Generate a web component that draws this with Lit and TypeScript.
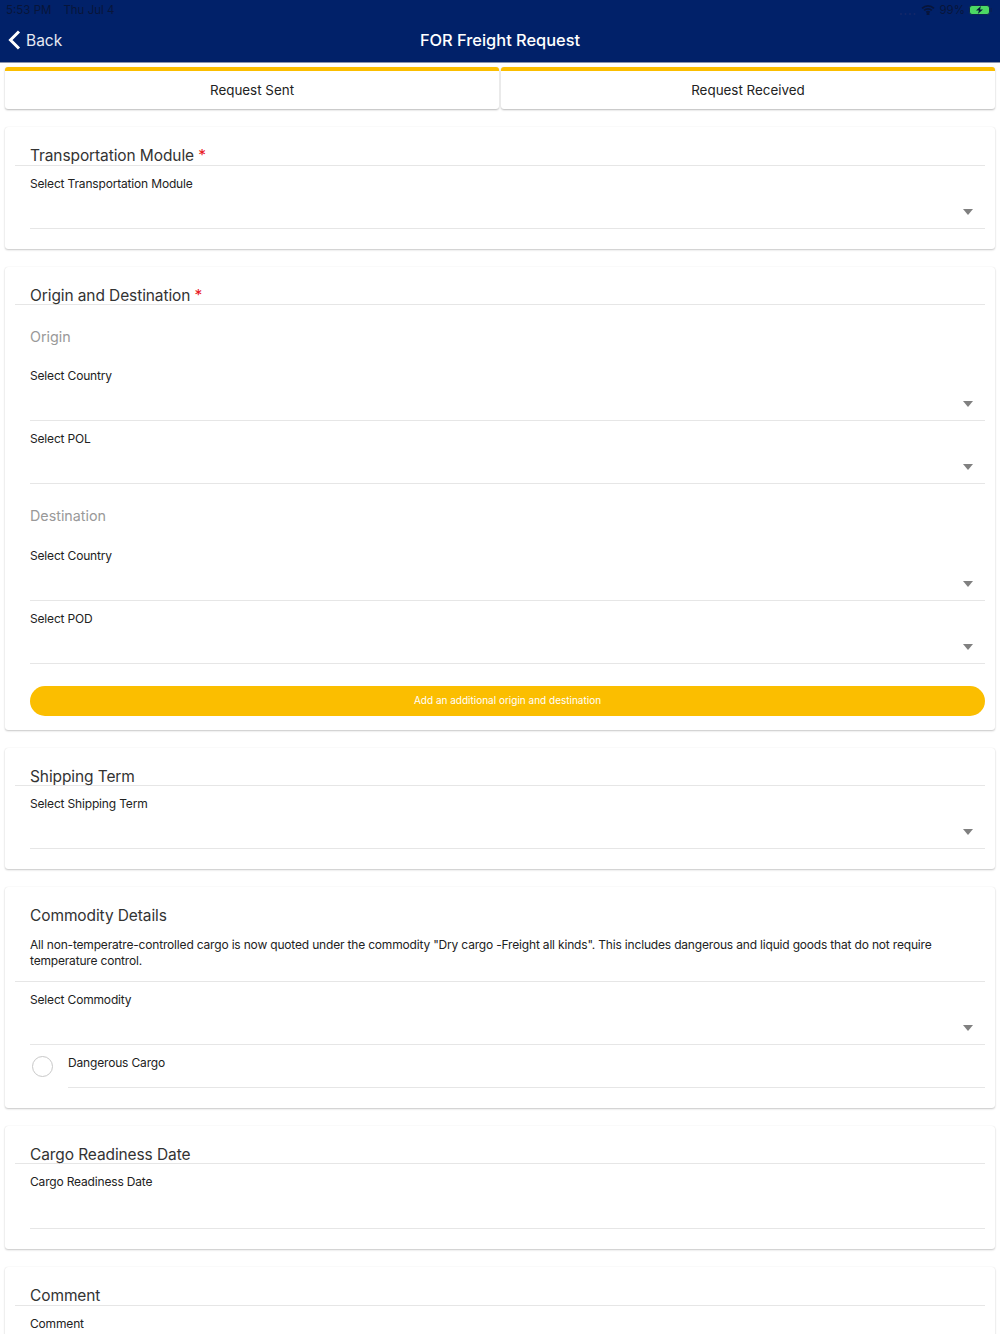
import { LitElement, html, css, svg } from 'lit';
import { customElement } from 'lit/decorators.js';

@customElement('app-root')
export class AppRoot extends LitElement {
  static styles = css`
    :host {
      display: block;
      width: 1000px;
      height: 1334px;
      overflow: hidden;
      background: #fff;
      font-family: Inter, 'Liberation Sans', sans-serif;
      color: #222;
    }
    .header {
      height: 62px;
      background: #012169;
      border-bottom: 1px solid #8a94ad;
    }
    .status {
      height: 19px;
      padding: 0 6px;
      display: flex;
      align-items: center;
      justify-content: space-between;
      font-size: 11.5px;
      color: #08153a;
    }
    .status-left {
      display: flex;
      gap: 12px;
    }
    .status-right {
      display: flex;
      align-items: center;
      gap: 4px;
      padding-right: 1px;
    }
    .nav {
      position: relative;
      height: 43px;
      display: flex;
      align-items: center;
      justify-content: center;
      color: #fff;
    }
    .back {
      position: absolute;
      left: 8px;
      top: 11px;
      display: flex;
      align-items: center;
      gap: 5px;
      font-size: 15.5px;
      color: #e6e9f2;
    }
    .nav-title {
      font-size: 16.4px;
      font-weight: 500;
      margin-top: -1px;
    }
    .tabs {
      display: flex;
      gap: 2px;
      padding: 4px 5px 0;
    }
    .tab {
      flex: 1;
      height: 38px;
      border-top: 4px solid #fbbe00;
      border-radius: 3px;
      background: #fff;
      box-shadow: 0 1px 2px rgba(0, 0, 0, 0.28);
      display: flex;
      align-items: center;
      justify-content: center;
      font-size: 13.4px;
    }
    .cards {
      display: flex;
      flex-direction: column;
      gap: 18px;
      padding: 18px 5px 0;
    }
    .card {
      background: #fff;
      border-radius: 3px;
      padding: 0 10px 20px;
      box-shadow: 0 1px 2px rgba(0, 0, 0, 0.22), 0 0 1px rgba(0, 0, 0, 0.1);
    }
    .card.origin {
      padding-bottom: 14px;
    }
    .card.date-card {
      padding-bottom: 20.5px;
    }
    .title {
      height: 38.5px;
      box-sizing: border-box;
      padding: 19px 0 0 15px;
      line-height: 20px;
      font-size: 15.5px;
      letter-spacing: -0.1px;
      color: #333;
      border-bottom: 1px solid #e6e6e6;
    }
    .title span {
      color: #e8141c;
    }
    .title.plain {
      height: auto;
      padding: 19px 15px 11.5px;
    }
    .note {
      font-size: 12px;
      letter-spacing: -0.18px;
      line-height: 16px;
      margin-top: 11px;
      color: #222;
    }
    .sub {
      padding: 21.5px 0 11.5px 15px;
      line-height: 20px;
      font-size: 14.3px;
      color: #999;
    }
    .sub.dest {
      padding-top: 22px;
    }
    .field {
      padding: 10px 0 0 15px;
    }
    .label {
      height: 16px;
      line-height: 16px;
      font-size: 12px;
      letter-spacing: -0.17px;
    }
    .control {
      height: 19px;
      border-bottom: 1px solid #e6e6e6;
      display: flex;
      justify-content: flex-end;
      padding: 17px 12.5px 0 0;
    }
    .caret {
      width: 0;
      height: 0;
      border-left: 5px solid transparent;
      border-right: 5px solid transparent;
      border-top: 6px solid #808080;
    }
    .date {
      height: 37.5px;
      border-bottom: 1px solid #e6e6e6;
    }
    .add {
      margin: 22.5px 0 0 15px;
      height: 29.5px;
      border-radius: 15px;
      background: #fbbe00;
      color: #fff;
      font-size: 10px;
      line-height: 29.5px;
      text-align: center;
    }
    .check {
      display: flex;
      padding-left: 15px;
    }
    .circle {
      box-sizing: border-box;
      width: 21px;
      height: 21px;
      margin: 11px 15px 0 2px;
      border: 1px solid #c8c8c8;
      border-radius: 50%;
    }
    .check-body {
      flex: 1;
      height: 43px;
      padding-top: 10.5px;
      box-sizing: border-box;
      border-bottom: 1px solid #e6e6e6;
    }
  `;

  private select(label: string) {
    return html`
      <div class="field">
        <div class="label">${label}</div>
        <div class="control"><div class="caret"></div></div>
      </div>
    `;
  }

  private signal() {
    return svg`<svg width="18" height="12" viewBox="0 0 18 12" fill="#14296a">
      <circle cx="2" cy="10" r="1"/>
      <circle cx="6.500" cy="10" r="1"/>
      <circle cx="11" cy="10" r="1"/>
      <circle cx="15.500" cy="10" r="1"/>
    </svg>`;
  }

  private wifi() {
    return svg`<svg width="14" height="10" viewBox="0 0 15 11" fill="none" stroke="#08153a" stroke-width="1.9">
      <path d="M1 3.6a9.4 9.4 0 0 1 13 0"/>
      <path d="M3.300 6a6 6 0 0 1 8.400 0"/>
      <path d="M5.600 8.200a2.800 2.800 0 0 1 3.800 0"/>
      <circle cx="7.500" cy="9.800" r="0.700" fill="#08153a"/>
    </svg>`;
  }

  private battery() {
    return svg`<svg width="24" height="10" viewBox="0 0 24 10">
      <rect x="0.500" y="0.500" width="20" height="9" rx="2.500" fill="#4cd964" stroke="#0a2a4a"/>
      <rect x="21.500" y="3" width="1.300" height="4" fill="#0a1f52"/>
      <path d="M12 1 7 5.500h3L8.800 9l5.200-4.500h-3z" fill="#08153a"/>
    </svg>`;
  }

  render() {
    return html`
      <div class="header">
        <div class="status">
          <div class="status-left"><span>5:53 PM</span><span>Thu Jul 4</span></div>
          <div class="status-right">
            ${this.signal()}${this.wifi()}<span>99%</span>${this.battery()}
          </div>
        </div>
        <div class="nav">
          <div class="back">
            <svg width="13" height="20" viewBox="0 0 13 20" fill="none" stroke="#fff" stroke-width="3">
              <path d="M11 1.500 2.500 10l8.500 8.500"/>
            </svg>
            <span>Back</span>
          </div>
          <div class="nav-title">FOR Freight Request</div>
        </div>
      </div>
      <div class="tabs">
        <div class="tab">Request Sent</div>
        <div class="tab">Request Received</div>
      </div>
      <div class="cards">
        <div class="card">
          <div class="title">Transportation Module <span>*</span></div>
          ${this.select('Select Transportation Module')}
        </div>
        <div class="card origin">
          <div class="title">Origin and Destination <span>*</span></div>
          <div class="sub">Origin</div>
          ${this.select('Select Country')}
          ${this.select('Select POL')}
          <div class="sub dest">Destination</div>
          ${this.select('Select Country')}
          ${this.select('Select POD')}
          <div class="add">Add an additional origin and destination</div>
        </div>
        <div class="card">
          <div class="title">Shipping Term</div>
          ${this.select('Select Shipping Term')}
        </div>
        <div class="card">
          <div class="title plain">
            Commodity Details
            <div class="note">
              All non-temperatre-controlled cargo is now quoted under the commodity "Dry cargo -Freight all kinds". This includes dangerous and liquid goods that do not require temperature control.
            </div>
          </div>
          ${this.select('Select Commodity')}
          <div class="check">
            <div class="circle"></div>
            <div class="check-body"><div class="label">Dangerous Cargo</div></div>
          </div>
        </div>
        <div class="card date-card">
          <div class="title">Cargo Readiness Date</div>
          <div class="field">
            <div class="label">Cargo Readiness Date</div>
            <div class="date"></div>
          </div>
        </div>
        <div class="card">
          <div class="title">Comment</div>
          <div class="field"><div class="label">Comment</div></div>
        </div>
      </div>
    `;
  }
}
